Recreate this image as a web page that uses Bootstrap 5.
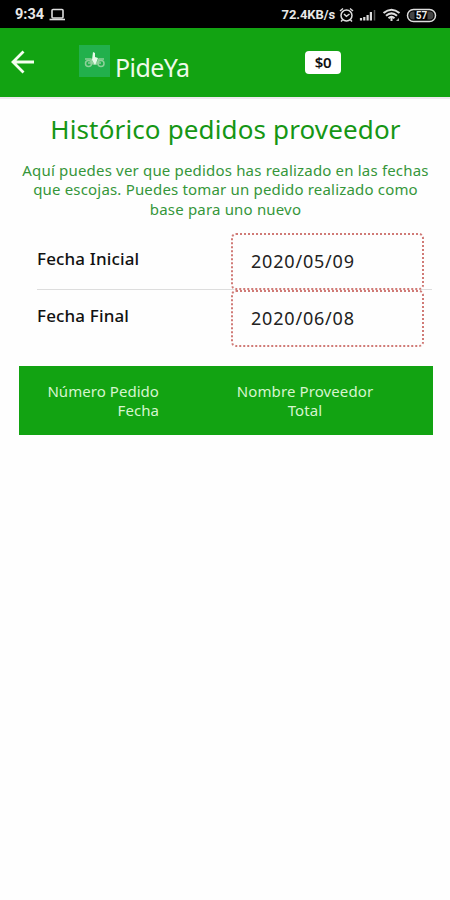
<!DOCTYPE html>
<html lang="es">
<head>
<meta charset="utf-8">
<meta name="viewport" content="width=device-width, initial-scale=1">
<title>PideYa</title>
<link rel="stylesheet" href="https://cdn.jsdelivr.net/npm/bootstrap@5.3.0/dist/css/bootstrap.min.css">
<style>
body{font-family:"Noto Sans","Open Sans",sans-serif;background:#fefefe;color:#111;min-height:900px;overflow:hidden}
.status{height:28px;background:#000;color:#e8e8e8;font:700 13px/28px Roboto,sans-serif;padding:1px 13px 0 15px}
.status .clock{font-size:14.5px}
.status .rate{font-size:13px;letter-spacing:-.1px}
.topbar{height:69px;background:#12a312;color:#fff}
.arrow{margin:21px 0 0 11px}
.logo{margin:17px 0 0 44px}
.brand{width:76px;font-size:25px;line-height:34px;margin:22px 0 0 5px;color:#effbe9;letter-spacing:-.6px}
.price{width:36px;height:23px;line-height:23px;margin:23px 0 0 114px;border-radius:4px;background:#fff;color:#111;font-size:15px;font-weight:600;letter-spacing:-.3px}
.edge{height:2px;background:#eee9ee}
.title{font-size:26px;line-height:34px;margin:13px 0 0;padding-left:1px;color:#159615;white-space:nowrap;letter-spacing:.14px}
.intro{font-size:15px;line-height:19.3px;margin:15px 0 0;padding-left:1px;color:#35963a;white-space:nowrap;letter-spacing:.18px}
.fields{margin:14px 18px 0 37px}
.fields .line{height:57px}
.fields .line:first-child{border-bottom:1px solid #ddd}
.fields label{font-size:17px;font-weight:500;line-height:24px;margin-top:14px;letter-spacing:.15px}
.date{width:193px;height:57px;border:2px dotted #d07a76;border-radius:5px;padding:1px 0 0 18px;margin-right:8px;font-size:18px;letter-spacing:.8px;color:#222;background:#fefefe}
.heads{height:69px;margin:19px 17px 0 19px;background:#12a312;color:#d6f5ce;font-size:15px;line-height:19.3px;padding-top:16px}
.heads .first{width:140px;letter-spacing:.05px}
.heads .second{width:138px;margin-left:77px;letter-spacing:.1px}
</style>
</head>
<body>
<div class="status d-flex justify-content-between">
  <div class="d-flex align-items-center"><span class="clock">9:34</span>
    <svg class="ms-1" width="18" height="14" viewBox="0 0 18 14" fill="none" stroke="#ddd" stroke-width="1.6"><rect x="4" y="1.500" width="11" height="8.500" rx="1"/><path d="M1.500 11.500h15.500"/></svg></div>
  <div class="d-flex align-items-center"><span class="rate">72.4KB/s</span>
    <svg width="102" height="18" viewBox="0 0 102 18" fill="none" stroke="#ddd" stroke-width="1.5">
      <circle cx="11.500" cy="9.500" r="5.500"/><path d="M9 8l2.400 2.300L14.500 8M5 5l3-2.500M15 2.500l3 2.500M7.500 14L6 15.500M15.500 14l1.500 1.500"/>
      <path d="M26 12v2.500M29.300 11v3.500M32.600 9v5.500M35.900 6v8.500" stroke-width="2.200"/><path d="M39.500 4v10.500" stroke="#555" stroke-width="1.500"/>
      <path d="M48.500 7q8-6.500 16 0M51 9.700q5.500-4.500 11 0M53.500 12.200q3-2.500 6 0" stroke-width="2.100"/><path d="M56.500 12v3" stroke-width="2"/><path d="M61 15l3-3v3z" fill="#aaa" stroke="none"/>
      <rect x="72.500" y="3.500" width="28" height="12" rx="6"/><path d="M79.500 5.500h-1a4 4 0 0 0 0 8h1M92.500 5.500h2a4 4 0 0 1 0 8h-2z" fill="#444" stroke="none"/>
      <text x="86.500" y="13.200" text-anchor="middle" fill="#eee" stroke="none" font-size="10" font-weight="700">57</text></svg></div>
</div>
<header class="topbar d-flex align-items-start">
  <svg class="arrow" width="24" height="26" viewBox="0 0 24 26" fill="none" stroke="#f4fff0" stroke-width="2.800"><path d="M23 13H2M12.500 2.500L2 13l10.500 10.500"/></svg>
  <svg class="logo" width="31" height="32" viewBox="0 0 31 32"><path fill="#22b04c" d="M0 0h31v32H0z"/><g fill="none" stroke="#8fd09a" stroke-width="1.500"><circle cx="9.500" cy="18.500" r="3"/><circle cx="22" cy="18.500" r="3"/><path d="M6 14h6l2 5h4l2-5h5M9 18h13"/></g><path d="M14 7l2 1v4l3 1-1 3-2 4-3-5z" fill="#e6fae8"/></svg>
  <div class="brand">PideYa</div>
  <div class="price text-center">$0</div>
</header>
<div class="edge"></div>
<main>
  <h1 class="title fw-normal text-center">Histórico pedidos proveedor</h1>
  <p class="intro text-center">Aquí puedes ver que pedidos has realizado en las fechas<br>que escojas. Puedes tomar un pedido realizado como<br>base para uno nuevo</p>
  <section class="fields">
    <div class="line d-flex justify-content-between"><label>Fecha Inicial</label><div class="date d-flex align-items-center flex-shrink-0">2020/05/09</div></div>
    <div class="line d-flex justify-content-between"><label>Fecha Final</label><div class="date d-flex align-items-center flex-shrink-0">2020/06/08</div></div>
  </section>
  <section class="heads d-flex">
    <div class="first text-end">Número Pedido<br>Fecha</div>
    <div class="second text-center">Nombre Proveedor<br>Total</div>
  </section>
</main>
<script src="https://cdn.jsdelivr.net/npm/bootstrap@5.3.0/dist/js/bootstrap.bundle.min.js"></script>
</body>
</html>
